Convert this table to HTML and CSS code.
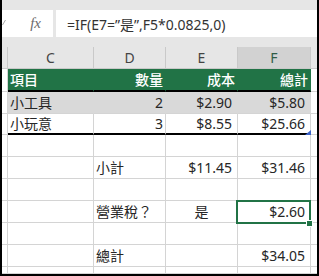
FILE: index.html
```html
<!DOCTYPE html>
<html lang="zh-Hant">
<head>
<meta charset="utf-8">
<title>Sheet</title>
<link rel="stylesheet" href="styles.css">
</head>
<body>
<div class="frame">
  <div class="fbar">
    <div class="namebox">
      <svg class="chev" width="6" height="25" viewBox="0 0 6 25"><path d="M0.5 14 L3.5 9" stroke="#a8a8a8" stroke-width="1" fill="none"/></svg>
      <span class="fx">fx</span>
    </div>
    <div class="formula">=IF(E7=”是”,F5*0.0825,0)</div>
  </div>
  <div class="sheet">
    <div class="ch"></div><div class="ch">C</div><div class="ch">D</div><div class="ch">E</div><div class="ch sel">F</div><div class="ch edge"></div>

    <div class="c"></div><div class="c th">項目</div><div class="c th r">數量</div><div class="c th r">成本</div><div class="c th r">總計</div><div class="c edge"></div>

    <div class="c"></div><div class="c band">小工具</div><div class="c band r">2</div><div class="c band r num">$2.90</div><div class="c band r num">$5.80</div><div class="c edge"></div>

    <div class="c"></div><div class="c tend">小玩意</div><div class="c tend r">3</div><div class="c tend r num">$8.55</div><div class="c tend r num mark">$25.66</div><div class="c edge"></div>

    <div class="c"></div><div class="c"></div><div class="c"></div><div class="c"></div><div class="c"></div><div class="c edge"></div>

    <div class="c"></div><div class="c"></div><div class="c">小計</div><div class="c r num">$11.45</div><div class="c r num">$31.46</div><div class="c edge"></div>

    <div class="c"></div><div class="c"></div><div class="c"></div><div class="c"></div><div class="c"></div><div class="c edge"></div>

    <div class="c"></div><div class="c"></div><div class="c">營業稅？</div><div class="c ctr">是</div><div class="c r num selc">$2.60</div><div class="c edge"></div>

    <div class="c"></div><div class="c"></div><div class="c"></div><div class="c"></div><div class="c"></div><div class="c edge"></div>

    <div class="c"></div><div class="c"></div><div class="c">總計</div><div class="c"></div><div class="c r num">$34.05</div><div class="c edge"></div>

    <div class="c"></div><div class="c"></div><div class="c"></div><div class="c"></div><div class="c"></div><div class="c edge"></div>
  </div>
</div>
</body>
</html>
```

FILE: styles.css
```css
html, body {
  margin: 0;
  padding: 0;
  background: #ffffff;
}

.frame {
  width: 319px;
  height: 276px;
  box-sizing: border-box;
  border: 2px solid #000000;
  border-top: 0;
  background: #ffffff;
  font-family: "Noto Sans", "Noto Sans CJK TC", sans-serif;
  overflow: hidden;
}

.fbar {
  height: 47px;
  box-sizing: border-box;
  padding: 10px 0;
  background: #e6e6e6;
  display: flex;
  gap: 3px;
}

.namebox {
  width: 51px;
  box-sizing: border-box;
  background: #ffffff;
  display: flex;
  align-items: center;
  justify-content: space-between;
  padding-right: 12px;
}

.chev {
  display: block;
}

.fx {
  font-family: "Liberation Serif", serif;
  font-style: italic;
  font-size: 15px;
  color: #6b6b6b;
  line-height: 1;
}

.formula {
  flex: 1;
  background: #ffffff;
  display: flex;
  align-items: center;
  padding-left: 11px;
  font-size: 14px;
  color: #333333;
  white-space: nowrap;
  overflow: hidden;
}

.sheet {
  display: grid;
  grid-template-columns: 6px 86px 72px 72px 73px 6px;
  grid-template-rows: 22px 23px 22px 21px repeat(6, 22px) 7px;
}

.ch {
  box-sizing: border-box;
  background: #e6e6e6;
  border-right: 1px solid #c9c9c9;
  border-bottom: 1px solid #c9c9c9;
  display: flex;
  align-items: center;
  justify-content: center;
  font-size: 14px;
  color: #444444;
  line-height: 16px;
}

.ch.sel {
  background: #d2d2d2;
  color: #2e5c46;
}

.c {
  box-sizing: border-box;
  border-right: 1px solid #d4d4d4;
  border-bottom: 1px solid #d4d4d4;
  display: flex;
  align-items: center;
  padding: 0 2px;
  font-size: 14px;
  line-height: 16px;
  color: #262626;
  white-space: nowrap;
}

.edge {
  border-right: 0;
}

.th {
  background: #217346;
  border-right-color: #217346;
  border-bottom: 2px solid #000000;
  color: #ffffff;
  font-weight: 500;
}

.band {
  background: #d9d9d9;
  border-right-color: #d9d9d9;
}

.tend {
  border-bottom: 2px solid #000000;
}

.r {
  justify-content: flex-end;
}

.num {
  padding-right: 5px;
}

.ctr {
  justify-content: center;
}

.mark {
  position: relative;
}

.mark::after {
  content: "";
  position: absolute;
  right: -1px;
  bottom: -2px;
  width: 6px;
  height: 5px;
  background: #3b62c7;
  clip-path: polygon(100% 0, 100% 100%, 0 100%);
}

.selc {
  position: relative;
}

.selc::before {
  content: "";
  position: absolute;
  top: -1px;
  left: -2px;
  right: -1px;
  bottom: -2px;
  border: 2px solid #217346;
}

.selc::after {
  content: "";
  position: absolute;
  right: -2px;
  bottom: -4px;
  width: 5px;
  height: 5px;
  background: #217346;
  box-shadow: 0 0 0 1px #ffffff;
}
```
